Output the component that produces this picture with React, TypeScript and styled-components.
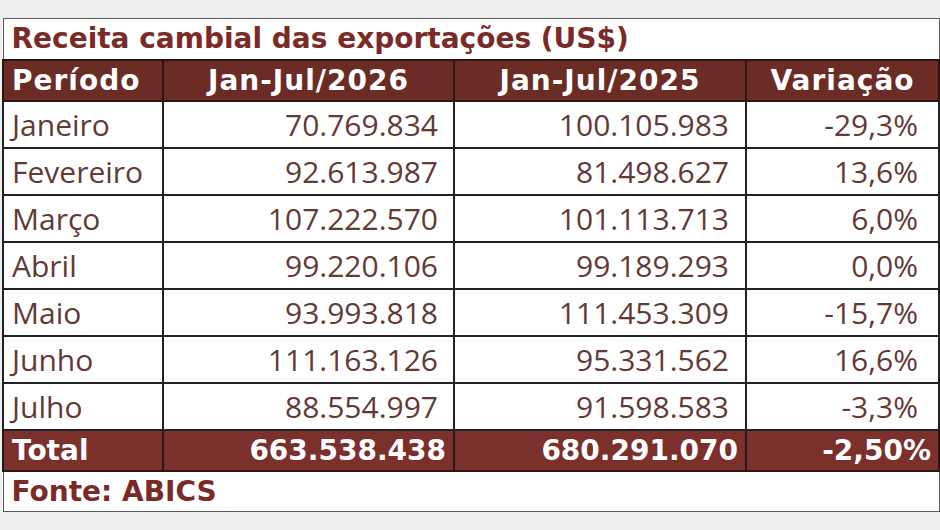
import React from "react";
import styled, { createGlobalStyle } from "styled-components";

const Global = createGlobalStyle`
  html, body { margin: 0; padding: 0; background: #efefef; }
  body { width: 940px; height: 530px; overflow: hidden; }
`;

const Page = styled.div`
  padding: 18px 0 0 2px;
`;

const Table = styled.table`
  width: 936px;
  border-collapse: collapse;
  table-layout: fixed;
  background: #ffffff;
  border: 1px solid #5a5a5a;
`;

const TitleCell = styled.td`
  height: 40px;
  padding: 0 0 0 8px;
  font-family: "DejaVu Sans", Verdana, sans-serif;
  font-weight: bold;
  font-size: 28px;
  color: #7a2b27;
  line-height: 1;
  vertical-align: middle;
  border-bottom: 2px solid #2a1612;
`;

const HeadCell = styled.th<{ $align: "left" | "center" | "right" }>`
  height: 39px;
  background: #6b2c25;
  color: #ffffff;
  font-family: "DejaVu Sans", Verdana, sans-serif;
  font-weight: bold;
  font-size: 28px;
  letter-spacing: 1px;
  text-align: ${(p) => p.$align};
  padding: 0 8px;
  line-height: 1;
  border: 2px solid #2a1612;
  border-top: none;
  vertical-align: middle;
`;

const BodyCell = styled.td<{ $align: "left" | "right"; $pad: number }>`
  height: 45px;
  font-family: "Open Sans", "Noto Sans", sans-serif;
  font-size: 30px;
  color: #623a35;
  text-align: ${(p) => p.$align};
  padding: 0 ${(p) => (p.$align === "right" ? p.$pad : 0)}px 0 ${(p) => (p.$align === "left" ? p.$pad : 0)}px;
  border: 2px solid #222222;
  line-height: 1;
  vertical-align: middle;
  white-space: nowrap;
`;

const TotalCell = styled.td<{ $align: "left" | "right" }>`
  height: 39px;
  background: #7b302b;
  color: #ffffff;
  font-family: "DejaVu Sans", Verdana, sans-serif;
  font-weight: bold;
  font-size: 28px;
  text-align: ${(p) => p.$align};
  padding: ${(p) => (p.$align === "left" ? "0 0 0 8px" : "0 7px 0 0")};
  border: 2px solid #2a1612;
  line-height: 1;
  vertical-align: middle;
  white-space: nowrap;
`;

const FooterCell = styled.td`
  height: 39px;
  padding: 0 0 0 8px;
  font-family: "DejaVu Sans", Verdana, sans-serif;
  font-weight: bold;
  font-size: 28px;
  color: #7a2b27;
  line-height: 1;
  vertical-align: middle;
`;

const rows: [string, string, string, string][] = [
  ["Janeiro", "70.769.834", "100.105.983", "-29,3%"],
  ["Fevereiro", "92.613.987", "81.498.627", "13,6%"],
  ["Março", "107.222.570", "101.113.713", "6,0%"],
  ["Abril", "99.220.106", "99.189.293", "0,0%"],
  ["Maio", "93.993.818", "111.453.309", "-15,7%"],
  ["Junho", "111.163.126", "95.331.562", "16,6%"],
  ["Julho", "88.554.997", "91.598.583", "-3,3%"],
];

export default function App() {
  return (
    <Page>
      <Global />
      <Table>
        <colgroup>
          <col style={{ width: 160 }} />
          <col style={{ width: 291 }} />
          <col style={{ width: 292 }} />
          <col style={{ width: 193 }} />
        </colgroup>
        <tbody>
          <tr>
            <TitleCell colSpan={4}>Receita cambial das exportações (US$)</TitleCell>
          </tr>
          <tr>
            <HeadCell $align="left">Período</HeadCell>
            <HeadCell $align="center">Jan-Jul/2026</HeadCell>
            <HeadCell $align="center">Jan-Jul/2025</HeadCell>
            <HeadCell $align="center">Variação</HeadCell>
          </tr>
          {rows.map((r) => (
            <tr key={r[0]}>
              <BodyCell $align="left" $pad={8}>{r[0]}</BodyCell>
              <BodyCell $align="right" $pad={15}>{r[1]}</BodyCell>
              <BodyCell $align="right" $pad={16}>{r[2]}</BodyCell>
              <BodyCell $align="right" $pad={20}>{r[3]}</BodyCell>
            </tr>
          ))}
          <tr>
            <TotalCell $align="left">Total</TotalCell>
            <TotalCell $align="right">663.538.438</TotalCell>
            <TotalCell $align="right">680.291.070</TotalCell>
            <TotalCell $align="right">-2,50%</TotalCell>
          </tr>
          <tr>
            <FooterCell colSpan={4}>Fonte: ABICS</FooterCell>
          </tr>
        </tbody>
      </Table>
    </Page>
  );
}
